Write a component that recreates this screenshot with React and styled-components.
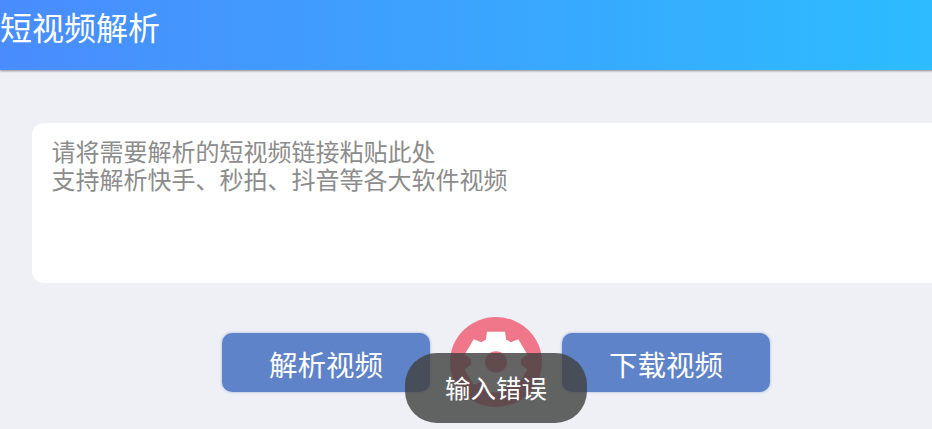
import styled, { createGlobalStyle } from 'styled-components';

const GlobalStyle = createGlobalStyle`
  html, body {
    margin: 0;
    width: 932px;
    height: 429px;
    overflow: hidden;
    background: #eff0f5;
  }
`;

const Page = styled.div`
  position: relative;
  width: 992px;
  height: 429px;
  overflow: hidden;
  background: #eff0f5;
  font-family: "Noto Sans CJK SC", "Noto Sans", sans-serif;
`;

const Header = styled.header`
  display: flex;
  align-items: center;
  height: 70px;
  padding-bottom: 18px;
  box-sizing: border-box;
  background: linear-gradient(90deg, #4a8cfd 0%, #2cbcff 94%);
  box-shadow: 0 1px 2px rgba(60, 60, 70, 0.55);
`;

const Title = styled.h1`
  margin: 0;
  font-size: 32px;
  font-weight: 400;
  line-height: 1;
  color: #fff;
`;

const Main = styled.main`
  padding: 53px 32px 0;
`;

const InputBox = styled.div`
  height: 160px;
  box-sizing: border-box;
  padding: 14px 20px 14px 19.500px;
  background: #fff;
  border-radius: 12px;
  font-size: 24px;
  line-height: 28px;
  color: #8c8c8c;
`;

const Actions = styled.div`
  display: flex;
  justify-content: center;
  align-items: flex-start;
  gap: 20px;
  margin-top: 34px;
`;

const ActionButton = styled.button`
  width: 208px;
  height: 59px;
  margin: 16px 0 0;
  padding: 3px 0 0;
  border: none;
  border-radius: 10px;
  background: #5f83c8;
  box-shadow: 0 0 2px 1px rgba(150, 175, 225, 0.45);
  color: #fff;
  font-family: inherit;
  font-size: 28.500px;
  line-height: 1;
`;

const GearButton = styled.svg`
  display: block;
  width: 92px;
  height: 90px;
`;

const Toast = styled.div`
  position: absolute;
  left: 405px;
  top: 353px;
  display: flex;
  align-items: center;
  justify-content: center;
  width: 182px;
  height: 70px;
  padding-bottom: 2px;
  box-sizing: border-box;
  border-radius: 32px;
  background: rgba(66, 66, 66, 0.82);
  color: #fff;
  font-size: 25.500px;
  line-height: 1;
`;

const TEETH = [0, 60, 120, 180, 240, 300];

function GearIcon() {
  return (
    <GearButton viewBox="0 0 92 92" preserveAspectRatio="none" aria-hidden="true">
      <circle cx="46" cy="46" r="46" fill="#f0778a" />
      <circle cx="46" cy="46" r="25" fill="#fff" />
      {TEETH.map((angle) => (
        <path
          key={angle}
          d="M35.500 26 L37 15 H55 L56.500 26 Z"
          fill="#fff"
          transform={`rotate(${angle} 46 46)`}
        />
      ))}
      <circle cx="46" cy="46" r="11" fill="#f0778a" />
    </GearButton>
  );
}

export default function App() {
  return (
    <Page>
      <GlobalStyle />
      <Header>
        <Title>短视频解析</Title>
      </Header>
      <Main>
        <InputBox>
          请将需要解析的短视频链接粘贴此处
          <br />
          支持解析快手、秒拍、抖音等各大软件视频
        </InputBox>
        <Actions>
          <ActionButton>解析视频</ActionButton>
          <GearIcon />
          <ActionButton>下载视频</ActionButton>
        </Actions>
      </Main>
      <Toast>输入错误</Toast>
    </Page>
  );
}
